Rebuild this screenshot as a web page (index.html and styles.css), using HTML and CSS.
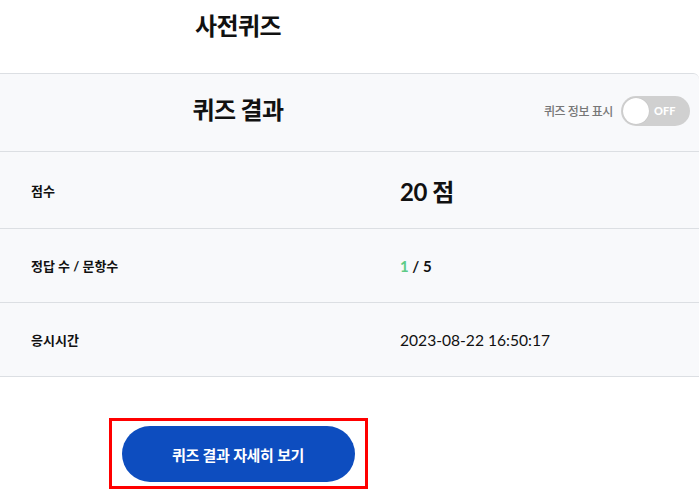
FILE: index.html
```html
<!DOCTYPE html>
<html lang="ko">
<head>
<meta charset="utf-8">
<link rel="stylesheet" href="styles.css">
</head>
<body>
<div class="page">
  <header class="top">
    <h1 class="title">사전퀴즈</h1>
  </header>
  <section class="card">
    <div class="card-head">
      <h2 class="card-title">퀴즈 결과</h2>
      <div class="toggle-wrap">
        <span class="toggle-label">퀴즈 정보 표시</span>
        <span class="toggle"><span class="knob"></span><span class="toggle-text">OFF</span></span>
      </div>
    </div>
    <div class="row row-score">
      <div class="label">점수</div>
      <div class="value score">20 점</div>
    </div>
    <div class="row">
      <div class="label">정답 수 / 문항수</div>
      <div class="value bold"><span class="correct">1</span> / 5</div>
    </div>
    <div class="row">
      <div class="label">응시시간</div>
      <div class="value date">2023-08-22 16:50:17</div>
    </div>
  </section>
  <div class="actions">
    <div class="btn-frame">
      <button class="btn">퀴즈 결과 자세히 보기</button>
    </div>
  </div>
</div>
</body>
</html>
```
FILE: styles.css
```css
* { box-sizing: border-box; }
html, body { margin: 0; padding: 0; background: #fff; }
body {
  font-family: Lato, "Noto Sans CJK KR", sans-serif;
  color: #111;
  width: 699px;
  overflow: hidden;
}
.top {
  height: 73px;
  width: 476px;
  display: flex;
  justify-content: center;
  padding-top: 9px;
}
.title {
  margin: 0;
  font-size: 24px;
  line-height: 34px;
  font-weight: 700;
  letter-spacing: -0.6px;
}
.card {
  background: #f8f9fb;
  border-top: 1px solid #dcdfe3;
  border-radius: 0 6px 0 0;
}
.card-head {
  height: 78px;
  display: flex;
  align-items: center;
  border-bottom: 1px solid #dcdfe3;
}
.card-title {
  margin: 0;
  width: 476px;
  text-align: center;
  font-size: 24px;
  line-height: 34px;
  font-weight: 700;
  letter-spacing: -0.6px;
  padding-bottom: 6px;
}
.toggle-wrap {
  flex: 1;
  display: flex;
  align-items: center;
  justify-content: flex-end;
  padding-right: 9px;
  gap: 8px;
  padding-bottom: 4px;
}
.toggle-label {
  font-size: 12px;
  color: #777;
  font-weight: 500;
  letter-spacing: -0.4px;
}
.toggle {
  width: 69px;
  height: 30px;
  border-radius: 15px;
  background: #d0d0d0;
  display: flex;
  align-items: center;
  padding-left: 2px;
}
.knob {
  width: 26px;
  height: 26px;
  border-radius: 50%;
  background: #fff;
  box-shadow: 0 0 1px rgba(0,0,0,0.2);
}
.toggle-text {
  color: #fff;
  font-weight: 900;
  font-size: 11px;
  margin-left: 5px;
}
.row {
  height: 74px;
  display: flex;
  align-items: center;
  border-bottom: 1px solid #dcdfe3;
}
.row-score { height: 77px; }
.label {
  width: 400px;
  padding-left: 31px;
  font-size: 13px;
  font-weight: 700;
}
.value {
  font-size: 15px;
}
.value.date { font-size: 15.6px; }
.value.bold { font-weight: 700; }
.correct { color: #5ecb86; }
.score {
  font-size: 24px;
  font-weight: 700;
  letter-spacing: -0.5px;
}
.actions {
  width: 476px;
  display: flex;
  justify-content: center;
  padding-top: 41px;
}
.btn-frame {
  border: 3px solid #f00;
  padding: 5px 10px 4px 10px;
}
.btn {
  width: 233px;
  height: 56px;
  border: none;
  border-radius: 28px;
  background: #0d4dbf;
  color: #fff;
  font-family: "Noto Sans CJK KR", sans-serif;
  font-size: 15px;
  font-weight: 700;
  letter-spacing: -0.4px;
}
```
